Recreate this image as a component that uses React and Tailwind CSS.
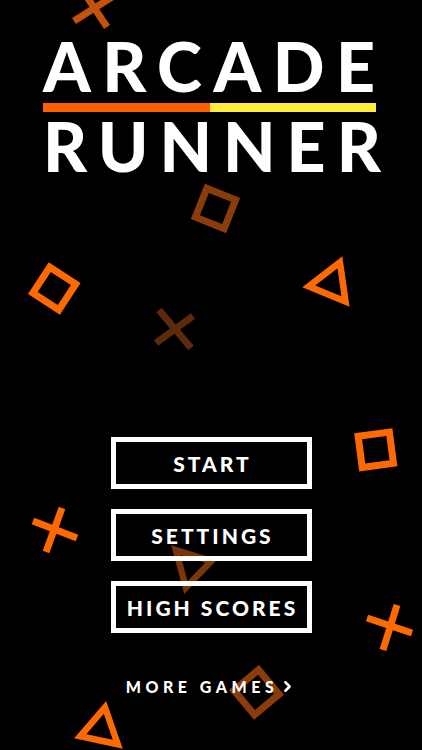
import { ChevronRight } from "lucide-react";

const ORANGE = "#ff6a00";

function Square({ cx, cy, size, angle, color }) {
  const h = size / 2;
  return (
    <rect
      x={cx - h}
      y={cy - h}
      width={size}
      height={size}
      fill="none"
      stroke={color}
      strokeWidth="7"
      transform={`rotate(${angle} ${cx} ${cy})`}
    />
  );
}

function Cross({ a, b, color }) {
  return (
    <g stroke={color} strokeWidth="7">
      <line x1={a[0]} y1={a[1]} x2={a[2]} y2={a[3]} />
      <line x1={b[0]} y1={b[1]} x2={b[2]} y2={b[3]} />
    </g>
  );
}

function Tri({ pts, color }) {
  return <polygon points={pts} fill="none" stroke={color} strokeWidth="6.5" strokeLinejoin="miter" />;
}

function Shapes() {
  return (
    <svg className="absolute inset-0 h-full w-full" viewBox="0 0 422 750" aria-hidden="true">
      <Cross a={[74, 21, 112, -3]} b={[81, -12, 107, 27]} color="#c4520f" />
      <Square cx={215.5} cy={208.5} size={31} angle={21.8} color="#8c3b0b" />
      <Square cx={54.3} cy={288.5} size={31} angle={33} color={ORANGE} />
      <Tri pts="339.9,262.3 345.5,301.5 308.7,286.3" color={ORANGE} />
      <Cross a={[159, 310, 191, 348]} b={[193, 316, 156, 343]} color="#5e2a0c" />
      <Square cx={375.8} cy={449.8} size={31.5} angle={-7.5} color={ORANGE} />
      <Cross a={[33, 521, 77, 538]} b={[62, 508, 46, 552]} color={ORANGE} />
      <Tri pts="175.9,550.1 211.3,561.1 185.9,587.5" color="#7a3508" />
      <Cross a={[367, 618, 412, 633]} b={[397, 605, 383, 650]} color={ORANGE} />
      <Square cx={256.5} cy={692.3} size={32} angle={50} color="#8c3b0b" />
      <Tri pts="105,707.5 117.8,744.3 80.2,736.3" color={ORANGE} />
    </svg>
  );
}

function MenuButton({ label }) {
  return (
    <button className="flex h-[52px] w-[201px] items-center justify-center border-[5px] border-white bg-transparent text-[21px] font-black leading-none tracking-[3px] text-white">
      <span className="pl-[3px]">{label}</span>
    </button>
  );
}

export default function App() {
  return (
    <div
      className="relative h-[750px] w-full overflow-hidden bg-black text-white"
      style={{ fontFamily: "Lato, 'Open Sans', sans-serif" }}
    >
      <Shapes />
      <div className="relative flex flex-col">
        <div className="ml-[43px] mt-[32px] w-[333px]">
          <h1 className="text-[68px] font-black leading-none tracking-[11.5px] whitespace-nowrap">ARCADE</h1>
          <div className="mt-[3px] flex h-[9px]">
            <div className="w-1/2 bg-[#ff5f00]" />
            <div className="w-1/2 bg-[#ffeb3b]" />
          </div>
          <div className="text-[68px] font-black leading-none tracking-[11px] whitespace-nowrap">RUNNER</div>
        </div>

        <div className="mt-[257px] flex flex-col items-center gap-[20px]">
          <MenuButton label="START" />
          <MenuButton label="SETTINGS" />
          <MenuButton label="HIGH SCORES" />
        </div>

        <button className="mx-auto mt-[45px] flex items-center text-[16px] font-black leading-none tracking-[4.5px] text-white">
          MORE GAMES
          <ChevronRight className="ml-[1px] h-[17px] w-[17px]" strokeWidth={3.5} />
        </button>
      </div>
    </div>
  );
}
